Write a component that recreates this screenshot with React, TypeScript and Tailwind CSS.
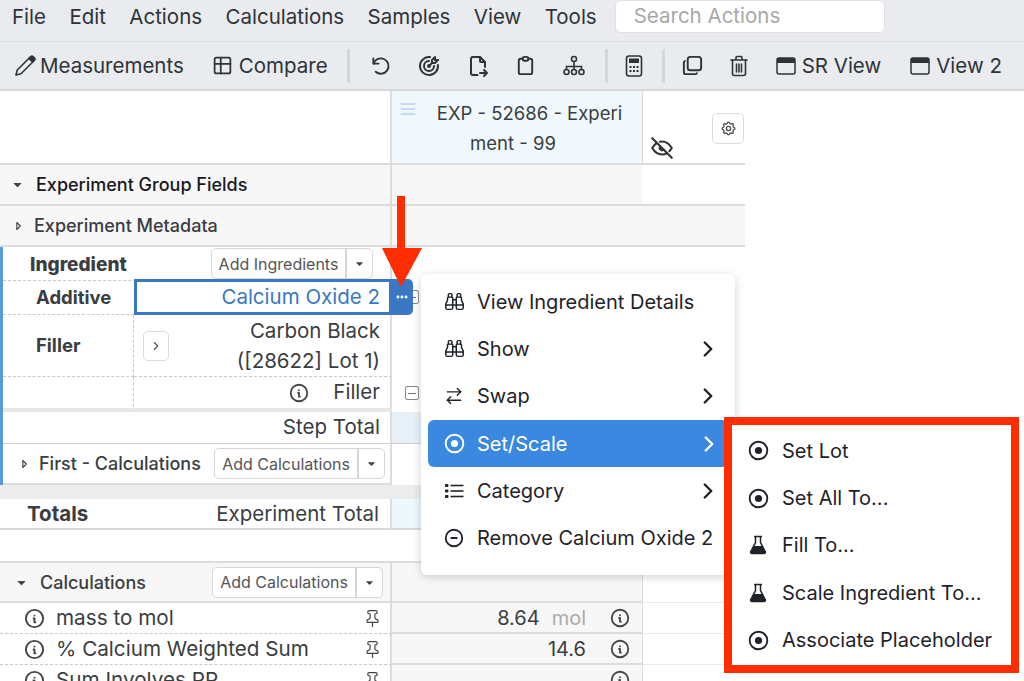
import type { ReactNode } from 'react';
import {
  TbCaretDownFilled, TbCaretRight, TbChevronRight, TbCircleMinus, TbClipboard, TbCopy, TbDots, TbEyeOff,
  TbFileExport, TbInfoCircle, TbMenu2, TbSettings, TbTable, TbTargetArrow,
} from 'react-icons/tb';
import { ArrowRightLeft, Binoculars, Pin } from 'lucide-react';

function WindowIcon() {
  return (
    <svg width="20" height="18" viewBox="0 0 20 18" fill="none">
      <rect x="1" y="1" width="18" height="16" rx="2" stroke="#2f3338" strokeWidth="1.5" />
      <rect x="1" y="1" width="18" height="5" fill="#2f3338" />
    </svg>
  );
}

function FlaskIcon() {
  return (
    <svg width="18" height="20" viewBox="0 0 18 20" fill="none">
      <path d="M5 1.5h8M6.500 1.500v6L1.800 16.500a1.300 1.300 0 0 0 1.200 2h12a1.300 1.300 0 0 0 1.200-2L11.500 7.500v-6" stroke="#1f2329" strokeWidth="1.500" />
      <path d="M4.800 11h8.400l3.300 6.500-1 1.300H3L1.600 17.500z" fill="#1f2329" />
    </svg>
  );
}

function DotIcon() {
  return (
    <svg width="21" height="21" viewBox="0 0 21 21" fill="none" stroke="currentColor">
      <circle cx="10.500" cy="10.500" r="8.800" strokeWidth="1.900" />
      <circle cx="10.500" cy="10.500" r="3.600" fill="currentColor" stroke="none" />
    </svg>
  );
}

function ListIcon() {
  return (
    <svg width="20" height="18" viewBox="0 0 20 18" fill="currentColor">
      <rect x="1" y="2" width="3.400" height="3" rx="0.800" />
      <rect x="1" y="7.500" width="3.400" height="3" rx="0.800" />
      <rect x="1" y="13" width="3.400" height="3" rx="0.800" />
      <rect x="6.500" y="2.700" width="13" height="1.600" />
      <rect x="6.500" y="8.200" width="13" height="1.600" />
      <rect x="6.500" y="13.700" width="13" height="1.600" />
    </svg>
  );
}

function PencilIcon() {
  return (
    <svg width="24" height="24" viewBox="0 0 24 24" fill="none" stroke="#2f3338" strokeWidth="1.600" strokeLinejoin="round">
      <path d="M3 21l1.200-5L16 4.200 19.800 8 8 19.800z" />
      <path d="M16 4.200l1.500-1.500a2 2 0 0 1 2.800 0l1 1a2 2 0 0 1 0 2.800L19.800 8z" fill="#2f3338" />
    </svg>
  );
}

function UndoIcon() {
  return (
    <svg width="23" height="23" viewBox="0 0 24 24" fill="none" stroke="#2f3338" strokeWidth="1.900" strokeLinecap="round" strokeLinejoin="round">
      <path d="M4.500 4.500v5.500h5.500" />
      <path d="M4.800 10A8 8 0 1 1 7 18.500" />
    </svg>
  );
}

function TreeIcon() {
  return (
    <svg width="24" height="24" viewBox="0 0 24 24" fill="none" stroke="#2f3338" strokeWidth="1.600">
      <circle cx="12" cy="5" r="2.500" />
      <circle cx="4.500" cy="18" r="2.500" />
      <circle cx="12" cy="18" r="2.500" />
      <circle cx="19.500" cy="18" r="2.500" />
      <path d="M12 7.500v8M4.500 15.500v-3h15v3" />
    </svg>
  );
}

function CalculatorIcon() {
  return (
    <svg width="20" height="24" viewBox="0 0 20 24" fill="none">
      <rect x="2.500" y="2" width="15" height="20" rx="2.500" stroke="#2f3338" strokeWidth="1.600" />
      <rect x="5" y="4.500" width="10" height="4.500" fill="#2f3338" />
      <path d="M5.500 12h2v2h-2zM9 12h2v2H9zM12.500 12h2v2h-2zM5.500 16h2v2h-2zM9 16h2v2H9zM12.500 16h2v2h-2z" fill="#2f3338" />
    </svg>
  );
}

function TrashIcon() {
  return (
    <svg width="20" height="24" viewBox="0 0 20 24" fill="none" stroke="#2f3338" strokeWidth="1.600" strokeLinecap="round">
      <path d="M2 6h16M7 5.500V3.500a1 1 0 0 1 1-1h4a1 1 0 0 1 1 1v2" />
      <path d="M3.500 6v13.500a2 2 0 0 0 2 2h9a2 2 0 0 0 2-2V6" />
      <path d="M7.500 10v8M10 10v8M12.500 10v8" />
    </svg>
  );
}

function MinusBox() {
  return (
    <div className="w-[14px] h-[14px] border border-[#888] rounded-[2px] flex items-center justify-center shrink-0">
      <div className="w-[8px] h-[1px] bg-[#777]" />
    </div>
  );
}

function Divider() {
  return <div className="w-[3px] h-[34px] bg-[#d3d6da]" />;
}

function SplitButton({ label, w }: { label: string; w: string }) {
  return (
    <div className={`${w} h-[31px] flex items-center border border-[#d6d6d6] rounded-[5px] bg-white text-[16px] text-[#555]`}>
      <span className="flex-1 text-center">{label}</span>
      <span className="w-[27px] h-full border-l-2 border-[#d6d6d6] flex items-center justify-center text-[#444]">
        <TbCaretDownFilled size={11} />
      </span>
    </div>
  );
}

function Row({ h, left, mid, midBg = 'bg-white', rowBg = 'bg-white', border = 'border-b border-[#d8d8d8]', midBorder, right = 'border-b border-[#ececec] border-l border-l-[#dcdcdc]' }: {
  h: string; left?: ReactNode; mid?: ReactNode; midBg?: string; rowBg?: string; border?: string; midBorder?: string; right?: string;
}) {
  return (
    <div className={`flex ${h}`}>
      <div className={`w-[392px] shrink-0 relative flex items-center ${rowBg} ${border} border-r-2 border-r-[#dcdcdc] [border-right-style:solid]!`}>{left}</div>
      <div className={`w-[250px] shrink-0 relative flex items-center ${midBg} ${midBorder ?? border}`}>{mid}</div>
      <div className={`w-[103px] shrink-0 ${right}`} />
    </div>
  );
}

function CalcRow({ label, value, unit }: { label: string; value?: string; unit?: string }) {
  return (
    <Row
      h="h-[31px]"
      midBg="bg-[#f7f7f7]"
      border="border-b border-dashed border-[#c9c9c9]"
      midBorder="border-b-2 border-[#dcdcdc]"
      left={
        <div className="flex items-center w-full pl-[23px] pr-[8px] text-[#3a3d41]">
          <TbInfoCircle size={23} className="text-[#444]" />
          <span className="ml-[10px] flex-1 text-[20.700px] whitespace-nowrap">{label}</span>
          <Pin size={19} strokeWidth={1.500} className="text-[#444]" />
        </div>
      }
      mid={
        <div className="flex items-center justify-end w-full pr-[11px] text-[20px] text-[#3a3d41]">
          {value && <span>{value}</span>}
          {unit && <span className="ml-[12px] text-[#aaa]">{unit}</span>}
          <TbInfoCircle size={22} className="ml-[23px] text-[#444]" />
        </div>
      }
    />
  );
}

const mainMenu = [
  { icon: <Binoculars size={21} strokeWidth={1.700} />, label: 'View Ingredient Details', sub: false, active: false },
  { icon: <Binoculars size={21} strokeWidth={1.700} />, label: 'Show', sub: true, active: false },
  { icon: <ArrowRightLeft size={20} strokeWidth={1.700} />, label: 'Swap', sub: true, active: false },
  { icon: <DotIcon />, label: 'Set/Scale', sub: true, active: true },
  { icon: <ListIcon />, label: 'Category', sub: true, active: false },
  { icon: <TbCircleMinus size={22} />, label: 'Remove Calcium Oxide 2', sub: false, active: false },
];

const subMenu = [
  { icon: <DotIcon />, label: 'Set Lot' },
  { icon: <DotIcon />, label: 'Set All To...' },
  { icon: <FlaskIcon />, label: 'Fill To...' },
  { icon: <FlaskIcon />, label: 'Scale Ingredient To...' },
  { icon: <DotIcon />, label: 'Associate Placeholder' },
];

export default function App() {
  return (
    <div className="relative w-[1024px] h-[681px] overflow-hidden bg-white text-[#2f3338] font-['Inter',sans-serif]">
      {/* menu bar */}
      <div className="h-[42px] bg-[#e9ebee] border-b border-[#dcdee1] flex items-start pl-[12px] text-[20.500px]">
        <div className="flex gap-[23.400px] pt-[2px]">
          {['File', 'Edit', 'Actions', 'Calculations', 'Samples', 'View', 'Tools'].map(m => <span key={m}>{m}</span>)}
        </div>
        <div className="ml-[18px] w-[270px] h-[33px] bg-white rounded-[6px] border border-[#e0e0e0] pl-[18px] flex items-center text-[#a8a8a8]">Search Actions</div>
      </div>

      {/* toolbar */}
      <div className="h-[49px] bg-[#e9ebee] border-b-2 border-[#d8d9db] flex items-center pl-[13px] text-[20.500px]">
        <PencilIcon />
        <span className="ml-[3px] mt-[2px]">Measurements</span>
        <TbTable size={21} className="ml-[28px]" />
        <span className="ml-[6px] mt-[2px]">Compare</span>
        <div className="ml-[19px]"><Divider /></div>
        <div className="ml-[19px]"><UndoIcon /></div>
        <TbTargetArrow size={24} className="ml-[25px]" />
        <TbFileExport size={24} className="ml-[25px]" />
        <TbClipboard size={23} className="ml-[24px]" />
        <div className="ml-[25px]"><TreeIcon /></div>
        <div className="ml-[19px]"><Divider /></div>
        <div className="ml-[16px]"><CalculatorIcon /></div>
        <div className="ml-[18px]"><Divider /></div>
        <TbCopy size={23} className="ml-[16px] -scale-y-100" />
        <div className="ml-[25px]"><TrashIcon /></div>
        <div className="ml-[27px]"><WindowIcon /></div>
        <span className="ml-[6px] mt-[2px]">SR View</span>
        <div className="ml-[29px]"><WindowIcon /></div>
        <span className="ml-[6px] mt-[2px]">View 2</span>
      </div>

      {/* table */}
      <div className="w-[745px]">
        <div className="flex h-[74px]">
          <div className="w-[392px] border-b-2 border-[#dcdcdc] border-r-2 border-r-[#dcdcdc]" />
          <div className="relative w-[250px] bg-[#f0f8fc] border-b-2 border-[#dcdcdc] pl-[44px] pr-[19px] pt-[7px] text-center text-[18.500px] leading-[30px] text-[#3a3d41]">
            <TbMenu2 size={20} className="absolute left-[6px] top-[8px] text-[#bccdf2]" />
            <div className="whitespace-nowrap">EXP - 52686 - Experi</div>
            <div className="pr-[33px] whitespace-nowrap">ment - 99</div>
          </div>
          <div className="relative w-[103px] border-b-2 border-[#dcdcdc] border-l border-l-[#dcdcdc]">
            <TbEyeOff size={26} className="absolute left-[6px] top-[44px] text-[#333]" />
            <div className="absolute left-[69px] top-[22px] w-[32px] h-[31px] border border-[#dcdcdc] rounded-[5px] flex items-center justify-center">
              <TbSettings size={17} className="text-[#555]" />
            </div>
          </div>
        </div>

        <Row
          h="h-[41px]"
          rowBg="bg-[#f7f7f7]"
          midBg="bg-[#f7f7f7]"
          border="border-b-2 border-[#dcdcdc]"
          right="border-b-2 border-[#dcdcdc]"
          left={<div className="flex items-center pl-[11px] text-[18px] font-medium text-[#17191c]"><TbCaretDownFilled size={13} className="text-[#444]" /><span className="ml-[12px]">Experiment Group Fields</span></div>}
        />
        <Row
          h="h-[41px]"
          rowBg="bg-[#f7f7f7]"
          midBg="bg-[#f7f7f7]"
          border="border-b-2 border-[#dcdcdc]"
          right="bg-[#f7f7f7] border-b-2 border-[#dcdcdc]"
          left={<div className="flex items-center pl-[11px] text-[18px] font-medium text-[#3a3d41]"><TbCaretRight size={14} className="text-[#444]" /><span className="ml-[9px]">Experiment Metadata</span></div>}
        />

        {/* ingredient group, blue bar on the left */}
        <div className="border-l-[3px] border-[#5b9bd5] w-[745px]">
          <div className="flex h-[34px]">
            <div className="w-[389px] shrink-0 flex items-center pl-[27px] border-b border-dashed border-[#c9c9c9] border-r-2 border-r-[#dcdcdc] [border-right-style:solid]!">
              <span className="mt-[3px] text-[19px] font-extrabold text-[#3a3d41]">Ingredient</span>
              <div className="ml-[auto] mr-[17px]"><SplitButton label="Add Ingredients" w="w-[162px]" /></div>
            </div>
          </div>
          <div className="flex h-[34px]">
            <div className="w-[131px] flex items-center pl-[33px] border-b border-dashed border-[#c9c9c9] text-[18.500px] font-bold text-[#3a3d41]">Additive</div>
            <div className="relative w-[258px] border-[3px] border-[#3a78c4] -mt-[2px] bg-white flex items-center justify-end pr-[9px] text-[20.500px] text-[#3a78c4]">
              Calcium Oxide 2
              <div className="absolute -right-[24px] -top-[3px] -bottom-[3px] w-[22px] bg-[#3a78c4] rounded-r-[5px] flex items-center justify-center text-white">
                <TbDots size={14} strokeWidth={3} />
              </div>
            </div>
            <div className="ml-[13px] mt-[9px]"><MinusBox /></div>
          </div>
          <div className="flex h-[62px]">
            <div className="w-[131px] flex items-center pl-[33px] border-b border-r border-dashed border-[#c9c9c9] text-[18.500px] font-bold text-[#3a3d41]">Filler</div>
            <div className="relative w-[258px] flex items-center border-b border-dashed border-[#c9c9c9] border-r-2 border-r-[#dcdcdc] [border-right-style:solid]! pr-[10px]">
              <div className="ml-[9px] w-[26px] h-[30px] border border-[#dcdcdc] rounded-[5px] flex items-center justify-center text-[#555]"><TbChevronRight size={14} /></div>
              <div className="flex-1 text-right text-[20.500px] leading-[30px] text-[#3a3d41]">Carbon Black<br />([28622] Lot 1)</div>
            </div>
          </div>
          <div className="flex h-[35px]">
            <div className="w-[131px] border-b-4 border-[#e7e7e7] border-r border-r-[#c9c9c9] [border-right-style:dashed]!" />
            <div className="w-[258px] flex items-center justify-end pr-[10px] border-b-4 border-[#e7e7e7] border-r-2 border-r-[#dcdcdc] text-[20.500px] text-[#3a3d41]">
              <TbInfoCircle size={22} className="text-[#444]" />
              <span className="ml-[23px]">Filler</span>
            </div>
            <div className="ml-[13px] mt-[9px]"><MinusBox /></div>
          </div>
          <div className="flex h-[32px]">
            <div className="w-[389px] flex items-center justify-end pr-[10px] border-b border-[#cfcfcf] border-r-2 border-r-[#dcdcdc] text-[20.500px] text-[#3a3d41]">Step Total</div>
            <div className="w-[250px] bg-[#e8f1f8] border-b border-[#cfcfcf]" />
          </div>
          <div className="flex h-[41px]">
            <div className="w-[389px] flex items-center pl-[14px] border-b-2 border-[#dcdcdc] border-r-2 border-r-[#dcdcdc] text-[#3a3d41]">
              <TbCaretRight size={14} className="text-[#444]" />
              <span className="ml-[8px] text-[18px] font-medium">First - Calculations</span>
              <div className="ml-auto mr-[5px]"><SplitButton label="Add Calculations" w="w-[171px]" /></div>
            </div>
          </div>
        </div>

        <div className="h-[14px] bg-[#ececec]" />

        <Row
          h="h-[31px]"
          midBg="bg-[#edf7fc]"
          border="border-b-2 border-[#d8d8d8]"
          left={<div className="flex items-center justify-between w-full pl-[27px] pr-[11px] pt-[1px] text-[#3a3d41]"><span className="text-[20.500px] font-bold">Totals</span><span className="text-[20.500px]">Experiment Total</span></div>}
        />
        <div className="h-[31px]" />
        <Row
          h="h-[42px]"
          rowBg="bg-[#f7f7f7]"
          midBg="bg-[#f7f7f7]"
          border="border-y-2 border-[#dcdcdc]"
          left={
            <div className="flex items-center w-full pl-[15px] text-[#3a3d41]">
              <TbCaretDownFilled size={13} className="text-[#444]" />
              <span className="ml-[12px] text-[18px] font-medium">Calculations</span>
              <div className="ml-auto mr-[7px]"><SplitButton label="Add Calculations" w="w-[171px]" /></div>
            </div>
          }
        />
        <CalcRow label="mass to mol" value="8.64" unit="mol" />
        <CalcRow label="% Calcium Weighted Sum" value="14.6" />
        <CalcRow label="Sum Involves PP" />
      </div>

      {/* context menu */}
      <div className="absolute left-[421px] top-[274px] w-[314px] h-[301px] bg-white rounded-[6px] shadow-[0_2px_10px_rgba(0,0,0,0.18)] pt-[4px] text-[20px] text-[#1f2329]">
        {mainMenu.map(item => (
          <div key={item.label} className={`h-[47.300px] flex items-center ${item.active ? 'ml-[7px] pl-[15px] pr-[6px] w-[300px] rounded-[6px] bg-[#3b88e0] text-white' : 'pl-[22px] pr-[13px] w-[313px]'}`}>
            <span className="w-[22px] flex justify-center">{item.icon}</span>
            <span className="ml-[12px] flex-1 whitespace-nowrap">{item.label}</span>
            {item.sub && <TbChevronRight size={26} strokeWidth={2.200} />}
          </div>
        ))}
      </div>

      {/* red arrow drawn on the screenshot */}
      <svg className="absolute left-[380px] top-[195px]" width="44" height="94" viewBox="0 0 44 94">
        <path d="M17 1h8v52h17L21 92 2 53h15z" fill="#ff2d00" />
      </svg>

      {/* sub menu with red outline */}
      <div className="absolute left-[724px] top-[417px] w-[295px] h-[256px] bg-white border-[8px] border-[#ff2d00] pt-[2px] text-[20px] text-[#1f2329]">
        {subMenu.map(item => (
          <div key={item.label} className="h-[47.400px] flex items-center pl-[15px]">
            <span className="w-[22px] flex justify-center">{item.icon}</span>
            <span className="ml-[13px] whitespace-nowrap">{item.label}</span>
          </div>
        ))}
      </div>
    </div>
  );
}
